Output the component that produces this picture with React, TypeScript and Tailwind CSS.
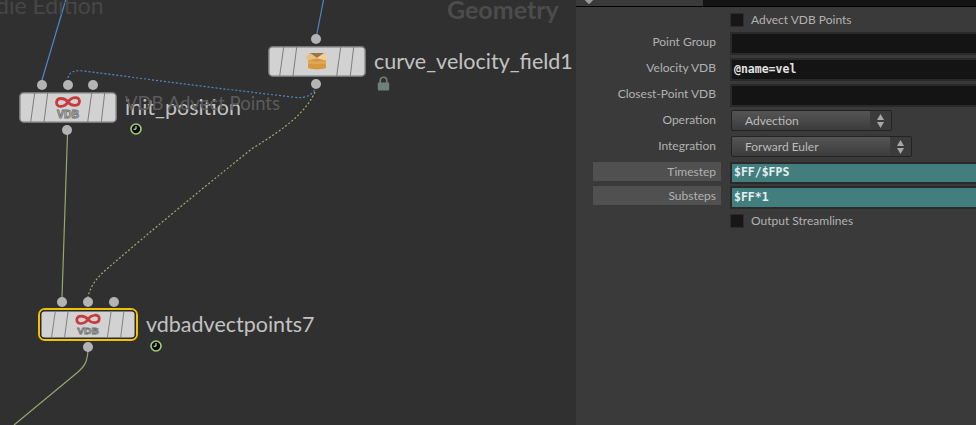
import React from 'react'

const uiFont = "font-['Lato','Open_Sans',sans-serif]"

// ---- network view pieces ----

function Dot() {
  return <div className="w-[10px] h-[10px] rounded-full bg-[#b4b4b4]" />
}

function VdbIcon() {
  return (
    <>
      <path
        d="M49 10 C45.5 5.5 38 5 37.5 10.5 C37.5 16 45.5 15.5 49 10 C52.5 4.5 60.5 4 60.5 9 C60.5 14.5 52.5 15 49 10 Z"
        fill="none"
        stroke="#c83a3e"
        strokeWidth="2.8"
      />
      <text
        x="49"
        y="26"
        textAnchor="middle"
        fontFamily="'Liberation Sans', sans-serif"
        fontWeight="700"
        fontSize="10.5"
        fill="#d6d6d6"
        stroke="#747474"
        strokeWidth="0.9"
      >
        VDB
      </text>
    </>
  )
}

function BoxIcon() {
  return (
    <>
      <path d="M42 7 L56 7 L59 12 L39 12 Z" fill="#9c7440" />
      <path d="M40 12 L58 12 L58 22 Q49 24.5 40 22 Z" fill="#e3a550" />
      <path d="M40 18 L58 18 L58 22 Q49 24.5 40 22 Z" fill="#d79840" />
      <path d="M42 7 L37 12 L41 14.5 L50 12.5 Z" fill="#e6c083" />
      <path d="M56 7 L61 12 L57 14.5 L48 12.5 Z" fill="#efd09a" />
      <path d="M40 14.5 L49 12.5 L58 14.5 L49 15.5 Z" fill="#cf9748" />
    </>
  )
}

function NodeBody({ children, selected }: { children: React.ReactNode; selected?: boolean }) {
  return (
    <svg
      width={selected ? 96 : 98}
      height={selected ? 29 : 31}
      viewBox="0 0 98 31"
      preserveAspectRatio="none"
      className="block"
    >
      <rect
        x="0.75"
        y="0.75"
        width="96.5"
        height="29.5"
        rx="4"
        fill="#d2d2d2"
        stroke={selected ? '#2a2a2a' : '#777777'}
        strokeWidth="1.5"
      />
      <g stroke="#7d7d7d" strokeWidth="1">
        <path d="M15.7 1 L11.7 30" />
        <path d="M28.7 1 L25 30" />
        <path d="M72.7 1 L68.7 30" />
        <path d="M85.7 1 L82.3 30" />
      </g>
      {children}
    </svg>
  )
}

function ClockBadge({ className }: { className: string }) {
  return (
    <svg width="12" height="12" viewBox="0 0 12 12" className={`block ${className}`}>
      <circle cx="6" cy="6" r="5" fill="#0c0c0c" stroke="#a3cf77" strokeWidth="1.6" />
      <path d="M6 3 L6 6.2 L3.6 6.2" fill="none" stroke="#f0f0f0" strokeWidth="1" />
    </svg>
  )
}

function LockBadge() {
  return (
    <svg width="13" height="15" viewBox="0 0 13 15" className="block ml-[3px] mt-px">
      <path d="M3.2 7 V4.5 A3.3 3.3 0 0 1 9.8 4.5 V7" fill="none" stroke="#6f7f7c" strokeWidth="1.6" />
      <rect x="0.8" y="6.5" width="11.4" height="8" rx="1" fill="#6f7f7c" />
    </svg>
  )
}

function NodeName({ children }: { children: string }) {
  return <div className="text-[21.5px] leading-[28px] text-[#c2c2c2] whitespace-nowrap">{children}</div>
}

function NetworkView() {
  return (
    <div className={`relative w-[576px] h-full shrink-0 overflow-hidden bg-[#303030] ${uiFont}`}>
      {/* wires */}
      <svg width="576" height="425" viewBox="0 0 576 425" className="absolute left-0 top-0" fill="none">
        <path d="M65.7 0 L41.7 81" stroke="#4f86c6" strokeWidth="1.2" />
        <path d="M323.5 0 L316.5 36" stroke="#4f86c6" strokeWidth="1.2" />
        <path
          d="M68 78 C69 72 74 70 84 71 L200 86 L292 97 Q305 99 311 94 L315 90"
          stroke="#5288c4"
          strokeWidth="1.2"
          strokeDasharray="2 2"
        />
        <path d="M67.5 134 L62 297" stroke="#93a86a" strokeWidth="1.2" />
        <path
          d="M315 92 C306 112 286 128 253 148 C200 190 150 232 108 268 Q91 282 88 297"
          stroke="#9bb06f"
          strokeWidth="1.2"
          strokeDasharray="2 2"
        />
        <path d="M88 351 C87 362 85 366 78 372 L14 425" stroke="#93a86a" strokeWidth="1.2" />
      </svg>

      {/* background labels */}
      <div className="absolute left-[-4px] top-[-9px] text-[23px] leading-[28px] text-[#474747] whitespace-nowrap">die Edition</div>
      <div className="absolute left-[447px] top-[-6px] text-[25px] leading-[30px] font-bold text-[#4c4c4c] whitespace-nowrap">Geometry</div>

      {/* init_position */}
      <div className="absolute left-[19px] top-[80px] flex items-start">
        <div className="flex flex-col">
          <div className="flex gap-[15.5px] pl-[18px] mb-[2px]">
            <Dot />
            <Dot />
            <Dot />
          </div>
          <NodeBody>
            <VdbIcon />
          </NodeBody>
          <div className="pl-[43px] mt-[2px]">
            <Dot />
          </div>
        </div>
        <div className="relative ml-[8px] mt-[13px]">
          <div className="absolute left-0 bottom-[20px] text-[18.5px] leading-[24px] text-[#5c5c5c] whitespace-nowrap">VDB Advect Points</div>
          <NodeName>init_position</NodeName>
          <ClockBadge className="ml-[5px] mt-[2px]" />
        </div>
      </div>

      {/* curve_velocity_field1 */}
      <div className="absolute left-[268px] top-[34px] flex items-start">
        <div className="flex flex-col">
          <div className="pl-[43px] mb-[2px]">
            <Dot />
          </div>
          <NodeBody>
            <BoxIcon />
          </NodeBody>
          <div className="pl-[43px] mt-[2px]">
            <Dot />
          </div>
        </div>
        <div className="ml-[8px] mt-[13px]">
          <NodeName>curve_velocity_field1</NodeName>
          <LockBadge />
        </div>
      </div>

      {/* vdbadvectpoints7 */}
      <div className="absolute left-[38px] top-[297px] flex items-start">
        <div className="flex flex-col">
          <div className="flex gap-[16px] pl-[19px] mb-[1px]">
            <Dot />
            <Dot />
            <Dot />
          </div>
          <div className="rounded-[7px] border-2 border-[#f2c200]">
            <NodeBody selected>
              <VdbIcon />
            </NodeBody>
          </div>
          <div className="pl-[45px] mt-[1px]">
            <Dot />
          </div>
        </div>
        <div className="ml-[8px] mt-[13px]">
          <NodeName>vdbadvectpoints7</NodeName>
          <ClockBadge className="ml-[4px] mt-[2px]" />
        </div>
      </div>
    </div>
  )
}

// ---- parameter pane pieces ----

function Label({ children, chip }: { children: string; chip?: boolean }) {
  return (
    <div className="w-[145px] shrink-0 pl-[17px] mr-[9px] self-start">
      <div
        className={`w-[128px] h-[19px] pr-[5px] text-right text-[12px] leading-[19px] whitespace-nowrap text-[#b2b2b2] ${
          chip ? 'bg-[#505050]' : ''
        }`}
      >
        {children}
      </div>
    </div>
  )
}

function Checkbox({ label, className }: { label: string; className: string }) {
  return (
    <div className={`flex items-center h-[14px] pl-[154px] ${className}`}>
      <div className="w-[14px] h-[14px] bg-[#171717] border border-[#2c2c2c]" />
      <span className="ml-[7px] text-[12px] text-[#b2b2b2] whitespace-nowrap">{label}</span>
    </div>
  )
}

function TextRow({ label, value, className, chip }: { label: string; value?: string; className: string; chip?: boolean }) {
  return (
    <div className={`flex ${className}`}>
      <Label chip={chip}>{label}</Label>
      <div
        className={`flex-1 h-full mr-[-6px] border-2 border-[#2a2a2a] pl-[2px] flex items-center font-['DejaVu_Sans_Mono','Liberation_Mono',monospace] font-bold text-[11.5px] ${
          chip ? 'bg-[#437e7f] text-[#e6efef]' : 'bg-[#141414] text-[#e2e2e2]'
        }`}
      >
        {value}
      </div>
    </div>
  )
}

function MenuRow({ label, value, width, className }: { label: string; value: string; width: string; className: string }) {
  return (
    <div className={`flex items-center h-[21px] ${className}`}>
      <Label>{label}</Label>
      <div className={`flex h-full ml-px border border-[#222222] rounded-[2px] bg-gradient-to-b from-[#555555] to-[#3c3c3c] ${width}`}>
        <div className="flex-1 pl-[13px] text-[12px] leading-[19px] text-[#bcbcbc] whitespace-nowrap">{value}</div>
        <div className="w-[21px] flex flex-col items-center justify-center gap-[2px] bg-[#3b3b3b]">
          <svg width="7" height="6" viewBox="0 0 7 6" className="block">
            <path d="M3.5 0 L7 6 L0 6 Z" fill="#a8a8a8" />
          </svg>
          <svg width="7" height="6" viewBox="0 0 7 6" className="block">
            <path d="M0 0 L7 0 L3.5 6 Z" fill="#a8a8a8" />
          </svg>
        </div>
      </div>
    </div>
  )
}

function ParmPane() {
  return (
    <div className={`flex-1 h-full bg-[#3a3a3a] overflow-hidden ${uiFont}`}>
      <div className="flex h-[7px] border-b border-black">
        <div className="w-[127px] relative">
          <div className="absolute left-[10px] top-[-3px] w-[6px] h-[6px] rotate-45 bg-[#9a9a9a]" />
        </div>
        <div className="flex-1 bg-[#141414]" />
      </div>
      <Checkbox label="Advect VDB Points" className="mt-[6px]" />
      <TextRow label="Point Group" className="h-[23px] mt-[5px]" />
      <TextRow label="Velocity VDB" value="@name=vel" className="h-[23px] mt-[3px]" />
      <TextRow label="Closest-Point VDB" className="h-[23px] mt-[3px]" />
      <MenuRow label="Operation" value="Advection" width="w-[161px]" className="mt-[3px]" />
      <MenuRow label="Integration" value="Forward Euler" width="w-[181px]" className="mt-[5px]" />
      <TextRow label="Timestep" value="$FF/$FPS" chip className="h-[22px] mt-[5px]" />
      <TextRow label="Substeps" value="$FF*1" chip className="h-[23px] mt-[2px]" />
      <Checkbox label="Output Streamlines" className="mt-[5px]" />
    </div>
  )
}

export default function App() {
  return (
    <div className="flex w-[976px] h-[425px] overflow-hidden">
      <NetworkView />
      <ParmPane />
    </div>
  )
}
